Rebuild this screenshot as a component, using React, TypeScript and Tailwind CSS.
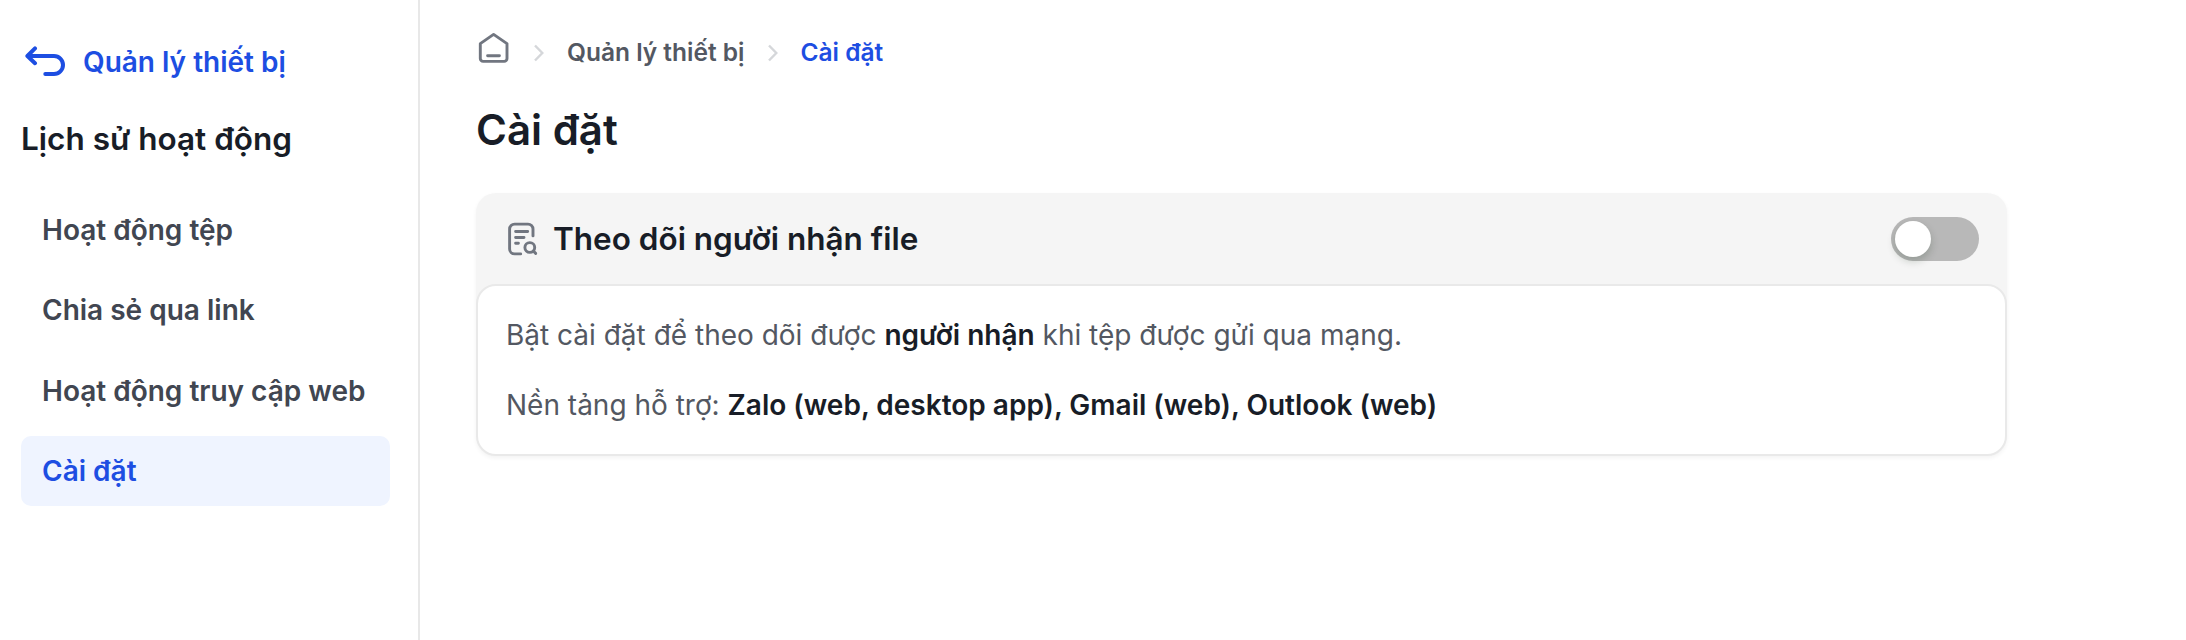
const navItems = [
  { label: 'Hoạt động tệp', active: false },
  { label: 'Chia sẻ qua link', active: false },
  { label: 'Hoạt động truy cập web', active: false },
  { label: 'Cài đặt', active: true },
];

function Chevron() {
  return (
    <svg className="h-[18px] w-[12px]" viewBox="0 0 12 18" fill="none" stroke="#d5d7da" strokeWidth="2.4">
      <path d="M2 1.500 9.300 9 2 16.500" />
    </svg>
  );
}

function Sidebar() {
  return (
    <aside className="flex h-full w-[420px] shrink-0 flex-col border-r-2 border-[#e8e8e8] pl-[21px] pr-7 pt-[42px]">
      <a className="flex h-10 items-center text-[28px] font-semibold leading-10 text-[#1d4ee2]">
        <svg className="ml-1 mr-[17px] h-8 w-[41px]" viewBox="0 0 41 32" fill="none" stroke="currentColor" strokeWidth="4" strokeLinecap="round" strokeLinejoin="round">
          <path d="M10 2.400 2.400 10l7.600 7.200M3 10h26a9 9 0 0 1 0 18h-8.700" />
        </svg>
        <span>Quản lý thiết bị</span>
      </a>
      <h2 className="mt-[37px] text-[31.5px] font-semibold leading-10 text-[#181d27]">Lịch sử hoạt động</h2>
      <nav className="mt-9 flex flex-col gap-[10.33px]">
        {navItems.map((item) => (
          <a
            key={item.label}
            className={
              item.active
                ? 'flex h-[70px] items-center whitespace-nowrap rounded-[10px] bg-[#eff4ff] pl-[21px] text-[28px] font-semibold text-[#1d4ee2]'
                : 'flex h-[70px] items-center whitespace-nowrap rounded-[10px] pl-[21px] text-[28px] font-semibold text-[#414651]'
            }
          >
            {item.label}
          </a>
        ))}
      </nav>
    </aside>
  );
}

function Card() {
  return (
    <section className="mt-[38px] w-[1531px] rounded-[20px] bg-[#f5f5f5] shadow-[0_2px_4px_rgba(10,13,18,0.05)]">
      <header className="flex h-[91px] items-center pl-[31px] pr-7">
        <svg className="mr-[14px] h-9 w-[32px]" viewBox="0 0 32 36" fill="none" stroke="#717680" strokeWidth="2.9" strokeLinecap="round" strokeLinejoin="round">
          <path d="M26 14.900V8.100a5 5 0 0 0-5-5H7.600a5 5 0 0 0-5 5v19.800a5 5 0 0 0 5 5h6.100" />
          <path d="M8.600 10.500h12.100M8.600 16.500H17M8.600 22.300h2.800" />
          <circle cx="22.800" cy="26.500" r="4.900" />
          <path d="m26.300 30 2.400 2.400" />
        </svg>
        <h3 className="text-[31.5px] font-semibold leading-[42px] text-[#181d27]">Theo dõi người nhận file</h3>
        <button className="ml-auto flex h-11 w-[88px] items-center rounded-full bg-[#b8b8b8] pl-1">
          <span className="size-9 rounded-full bg-white shadow-[0_4px_8px_rgba(0,35,11,0.2)]" />
        </button>
      </header>
      <div className="flex h-[172px] flex-col gap-[30px] rounded-[20px] border-2 border-[#e9e9e9] bg-white pl-7 pt-[29px] text-[28px] leading-10 text-[#535862]">
        <p>
          Bật cài đặt để theo dõi được <b className="font-semibold text-[#181d27]">người nhận</b> khi tệp được gửi qua mạng.
        </p>
        <p>
          Nền tảng hỗ trợ: <b className="font-semibold text-[#181d27]">Zalo (web, desktop app), Gmail (web), Outlook (web)</b>
        </p>
      </div>
    </section>
  );
}

export default function App() {
  return (
    <div className="flex h-[640px] w-full overflow-hidden bg-white font-['Inter',sans-serif]">
      <Sidebar />
      <main className="flex-1 pl-14 pt-8">
        <div className="flex h-10 items-center text-[24.5px] font-semibold leading-10 text-[#535862]">
          <svg className="mb-2 ml-[2px] h-[32px] w-[32px]" viewBox="0 0 32 32" fill="none" stroke="#717680" strokeWidth="2.9" strokeLinecap="round" strokeLinejoin="round">
            <path d="M2.300 11.600 15.600 2.400 29 11.600v15a2.800 2.800 0 0 1-2.800 2.800H5.100a2.800 2.800 0 0 1-2.800-2.800Z" />
            <path d="M9.600 23.700h11.800" />
          </svg>
          <span className="ml-[23px] mt-[2px] flex"><Chevron /></span>
          <span className="ml-[22px]">Quản lý thiết bị</span>
          <span className="ml-[22.5px] mt-[2px] flex"><Chevron /></span>
          <span className="ml-[21.5px] text-[#1d4ee2]">Cài đặt</span>
        </div>
        <h1 className="mt-[33px] text-[42px] font-semibold leading-[50px] text-[#181d27]">Cài đặt</h1>
        <Card />
      </main>
    </div>
  );
}
